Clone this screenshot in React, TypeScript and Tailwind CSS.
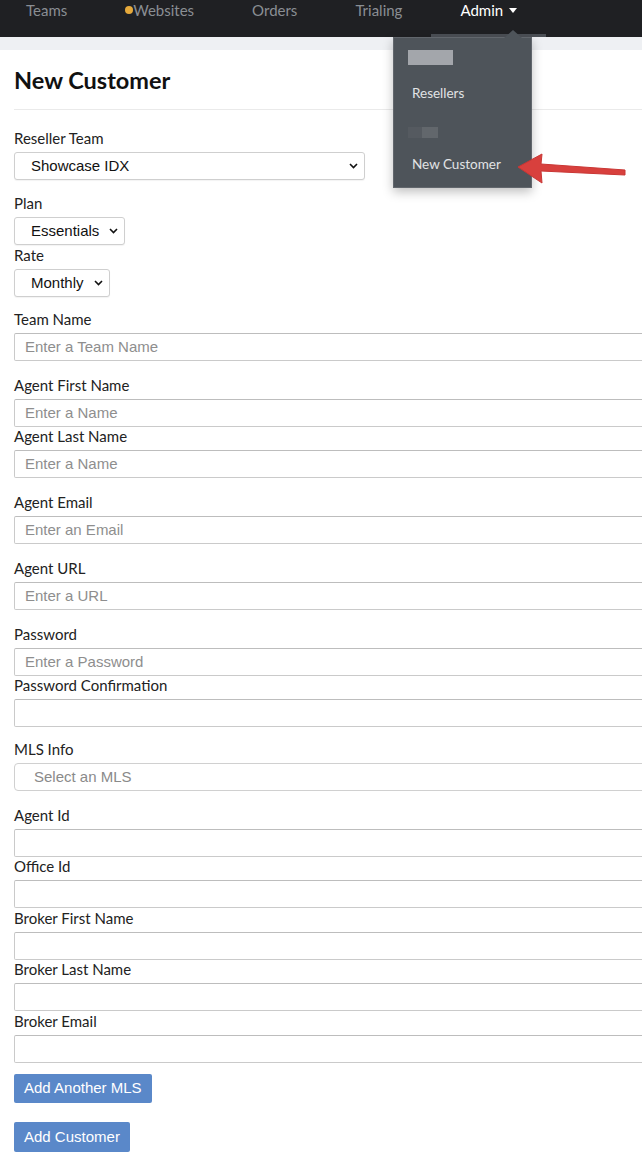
import { ReactNode } from "react";

const labelFont = { fontFamily: "Lato, 'Noto Sans', sans-serif" };
const inputFont = { fontFamily: "'Liberation Sans', Arial, sans-serif" };

function Chevron() {
  return (
    <svg
      width="9"
      height="6"
      viewBox="0 0 9 6"
      className="absolute right-[6px] top-1/2 -translate-y-1/2"
    >
      <path d="M1 1l3.5 3.5L8 1" fill="none" stroke="#111" strokeWidth="1.6" />
    </svg>
  );
}

function Label({ children }: { children: ReactNode }) {
  return (
    <div className="text-[15px] leading-[19px] text-[#222] mb-[4px]">
      {children}
    </div>
  );
}

function TextField({
  label,
  placeholder,
  gap = "mb-0",
}: {
  label: string;
  placeholder?: string;
  gap?: string;
}) {
  return (
    <div className={gap}>
      <Label>{label}</Label>
      <div className="w-[660px] h-[28px] border border-[#cacaca] border-t-[#bdbdbd] rounded-[2px] bg-white flex items-center pl-[10px]">
        <span className="text-[15px] text-[#8e8e8e]" style={inputFont}>
          {placeholder}
        </span>
      </div>
    </div>
  );
}

function NativeSelect({ value, width }: { value: string; width: string }) {
  return (
    <div
      className={`${width} h-[28px] relative border border-[#cfcfcf] rounded-[3px] bg-white flex items-center pl-[16px] shadow-[0_1px_1px_rgba(0,0,0,0.05)]`}
    >
      <span className="text-[15px] text-[#111]" style={inputFont}>
        {value}
      </span>
      <Chevron />
    </div>
  );
}

export default function App() {
  const navItems = ["Teams", "Websites", "Orders", "Trialing"];

  return (
    <div className="w-[642px] min-h-[1154px] bg-white overflow-hidden relative" style={labelFont}>
      {/* top nav */}
      <div className="h-[37px] bg-[#1f2023] flex -ml-[3px]">
        {navItems.map((item) => (
          <div
            key={item}
            className="px-[29px] text-[15px] leading-[20px] text-[#8a8e93] flex items-start"
          >
            {item === "Websites" ? (
              <span className="inline-block w-[8px] h-[8px] rounded-full bg-[#e6a93b] mt-[6px]" />
            ) : null}
            {item}
          </div>
        ))}
        <div className="px-[29px] text-[15px] leading-[20px] text-white flex items-start relative">
          Admin
          <span className="inline-block ml-[6px] mt-[8px] w-0 h-0 border-l-[4px] border-r-[4px] border-t-[5px] border-l-transparent border-r-transparent border-t-white" />
          <div className="absolute left-0 right-0 bottom-0 h-[3px] bg-[#4b4f55]" />
        </div>
      </div>
      <div className="h-[13px] bg-[#eef0f3]" />

      {/* admin dropdown */}
      <div className="absolute left-[393px] top-[37px] w-[139px] h-[151px] bg-[#4e545a] border border-[#62676d] shadow-[0_4px_10px_rgba(0,0,0,0.25)] z-10">
        <div className="absolute -top-[8px] left-[110px] w-0 h-0 border-l-[9px] border-r-[9px] border-b-[8px] border-l-transparent border-r-transparent border-b-[#4e545a]" />
        <div className="pl-[14px] pt-[12px]">
          <div className="w-[45px] h-[15px] bg-[#a3a6ab]" />
          <div className="text-[13.5px] leading-[18px] text-[#e2e3e5] mt-[19px] pl-[4px]">Resellers</div>
          <div className="flex mt-[25px]">
            <div className="w-[14px] h-[11px] bg-[#555a60]" />
            <div className="w-[16px] h-[11px] bg-[#62676c]" />
          </div>
          <div className="text-[13.5px] leading-[18px] text-[#e2e3e5] mt-[17px] pl-[4px]">New Customer</div>
        </div>
      </div>

      {/* red arrow */}
      <svg className="absolute left-[510px] top-[148px] z-20" width="124" height="42" viewBox="0 0 124 42">
        <path
          d="M8 19 L32 6 L31 16 L115 22 L115 27 L31 23 L32 35 Z"
          fill="#d8403d"
          stroke="#c93634"
          strokeWidth="1"
          strokeLinejoin="round"
        />
      </svg>

      {/* form */}
      <div className="pl-[14px] pt-[15px]">
        <h1 className="text-[23.5px] leading-[31px] font-bold text-[#111]">New Customer</h1>
        <div className="h-px bg-[#eaeaea] mt-[13px] mb-[19px]" />

        <div className="mb-[14px]">
          <Label>Reseller Team</Label>
          <NativeSelect value="Showcase IDX" width="w-[351px]" />
        </div>
        <div className="mb-[1px]">
          <Label>Plan</Label>
          <NativeSelect value="Essentials" width="w-[111px]" />
        </div>
        <div className="mb-[13px]">
          <Label>Rate</Label>
          <NativeSelect value="Monthly" width="w-[96px]" />
        </div>

        <TextField label="Team Name" placeholder="Enter a Team Name" gap="mb-[15px]" />
        <TextField label="Agent First Name" placeholder="Enter a Name" />
        <TextField label="Agent Last Name" placeholder="Enter a Name" gap="mb-[15px]" />
        <TextField label="Agent Email" placeholder="Enter an Email" gap="mb-[15px]" />
        <TextField label="Agent URL" placeholder="Enter a URL" gap="mb-[15px]" />
        <TextField label="Password" placeholder="Enter a Password" />
        <TextField label="Password Confirmation" gap="mb-[13px]" />

        <div className="mb-[15px]">
          <Label>MLS Info</Label>
          <div className="w-[660px] h-[28px] border border-[#d0d0d0] rounded-[4px] bg-white flex items-center pl-[19px]">
            <span className="text-[15px] text-[#8a8a8a]" style={inputFont}>
              Select an MLS
            </span>
          </div>
        </div>

        <TextField label="Agent Id" />
        <TextField label="Office Id" gap="mb-[1px]" />
        <TextField label="Broker First Name" />
        <TextField label="Broker Last Name" gap="mb-[1px]" />
        <TextField label="Broker Email" />

        <div className="mt-[11px] flex flex-col items-start gap-[19px]" style={inputFont}>
          <button className="h-[29px] px-[10px] bg-[#5a88c9] text-white text-[15px] rounded-[2px]">
            Add Another MLS
          </button>
          <button className="h-[30px] px-[10px] bg-[#5a88c9] text-white text-[15px] rounded-[2px]">
            Add Customer
          </button>
        </div>
      </div>
    </div>
  );
}
